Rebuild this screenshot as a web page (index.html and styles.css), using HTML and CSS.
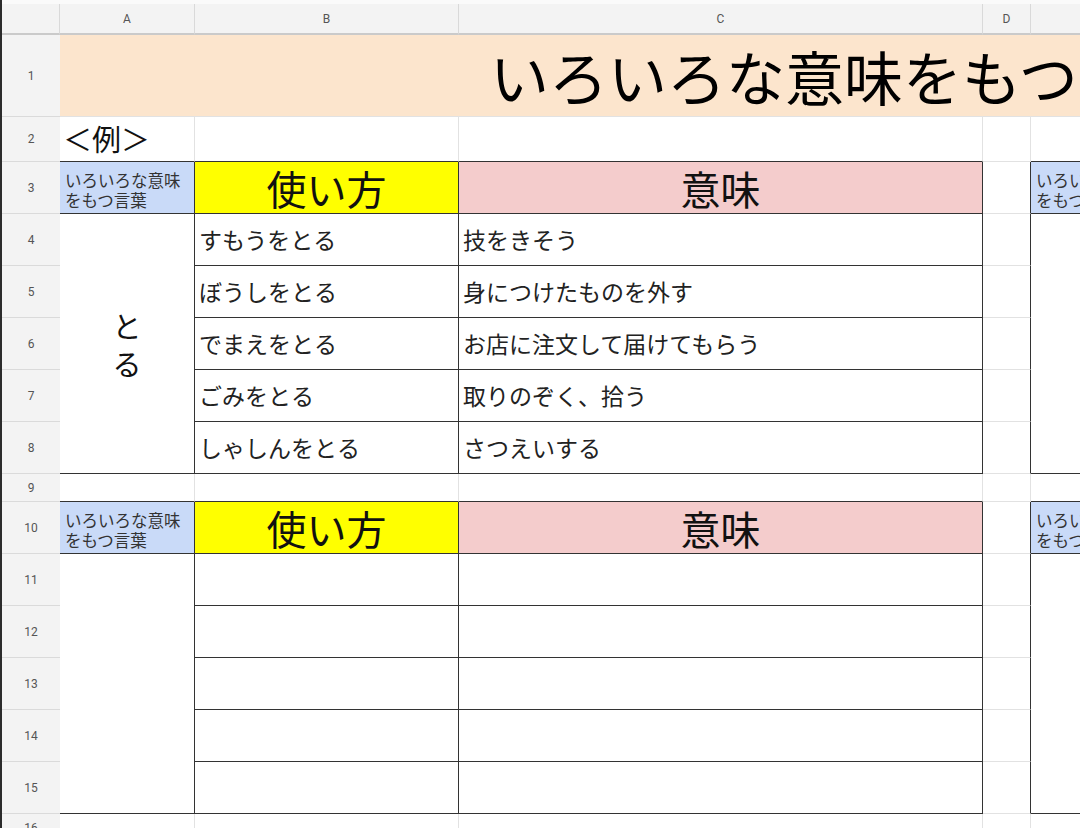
FILE: index.html
```html
<!DOCTYPE html>
<html lang="ja">
<head>
<meta charset="utf-8">
<title>いろいろな意味をもつ言葉</title>
<link rel="stylesheet" href="styles.css">
</head>
<body>
<div class="frame">
  <div class="sheet">
    <!-- column headers -->
    <div class="colhead"></div>
    <div class="colhead">A</div>
    <div class="colhead">B</div>
    <div class="colhead">C</div>
    <div class="colhead">D</div>
    <div class="colhead"></div>

    <!-- row 1: title -->
    <div class="rowhead">1</div>
    <div class="cell title">いろいろな意味をもつ言葉</div>

    <!-- row 2 -->
    <div class="rowhead">2</div>
    <div class="cell dk-b example">＜例＞</div>
    <div class="cell dk-b"></div>
    <div class="cell dk-b"></div>
    <div class="cell"></div>
    <div class="cell dk-b"></div>

    <!-- row 3: first table head -->
    <div class="rowhead">3</div>
    <div class="cell dk-r dk-b word-head">いろいろな意味<br>をもつ言葉</div>
    <div class="cell dk-r dk-b use-head">使い方</div>
    <div class="cell dk-r dk-b mean-head">意味</div>
    <div class="cell dk-r"></div>
    <div class="cell dk-b word-head">いろいろな意味<br>をもつ言葉</div>

    <!-- rows 4-8 -->
    <div class="rowhead">4</div>
    <div class="cell dk-r dk-b word span5">と<br>る</div>
    <div class="cell dk-r dk-b entry">すもうをとる</div>
    <div class="cell dk-r dk-b entry">技をきそう</div>
    <div class="cell dk-r"></div>
    <div class="cell dk-b span5"></div>

    <div class="rowhead">5</div>
    <div class="cell dk-r dk-b entry">ぼうしをとる</div>
    <div class="cell dk-r dk-b entry">身につけたものを外す</div>
    <div class="cell dk-r"></div>

    <div class="rowhead">6</div>
    <div class="cell dk-r dk-b entry">でまえをとる</div>
    <div class="cell dk-r dk-b entry">お店に注文して届けてもらう</div>
    <div class="cell dk-r"></div>

    <div class="rowhead">7</div>
    <div class="cell dk-r dk-b entry">ごみをとる</div>
    <div class="cell dk-r dk-b entry">取りのぞく、拾う</div>
    <div class="cell dk-r"></div>

    <div class="rowhead">8</div>
    <div class="cell dk-r dk-b entry">しゃしんをとる</div>
    <div class="cell dk-r dk-b entry">さつえいする</div>
    <div class="cell dk-r"></div>

    <!-- row 9: spacer -->
    <div class="rowhead">9</div>
    <div class="cell dk-b"></div>
    <div class="cell dk-b"></div>
    <div class="cell dk-b"></div>
    <div class="cell"></div>
    <div class="cell dk-b"></div>

    <!-- row 10: second table head -->
    <div class="rowhead">10</div>
    <div class="cell dk-r dk-b word-head">いろいろな意味<br>をもつ言葉</div>
    <div class="cell dk-r dk-b use-head">使い方</div>
    <div class="cell dk-r dk-b mean-head">意味</div>
    <div class="cell dk-r"></div>
    <div class="cell dk-b word-head">いろいろな意味<br>をもつ言葉</div>

    <!-- rows 11-15: blank entries -->
    <div class="rowhead">11</div>
    <div class="cell dk-r dk-b span5"></div>
    <div class="cell dk-r dk-b"></div>
    <div class="cell dk-r dk-b"></div>
    <div class="cell dk-r"></div>
    <div class="cell dk-b span5"></div>

    <div class="rowhead">12</div>
    <div class="cell dk-r dk-b"></div>
    <div class="cell dk-r dk-b"></div>
    <div class="cell dk-r"></div>

    <div class="rowhead">13</div>
    <div class="cell dk-r dk-b"></div>
    <div class="cell dk-r dk-b"></div>
    <div class="cell dk-r"></div>

    <div class="rowhead">14</div>
    <div class="cell dk-r dk-b"></div>
    <div class="cell dk-r dk-b"></div>
    <div class="cell dk-r"></div>

    <div class="rowhead">15</div>
    <div class="cell dk-r dk-b"></div>
    <div class="cell dk-r dk-b"></div>
    <div class="cell dk-r"></div>

    <!-- row 16 -->
    <div class="rowhead">16</div>
    <div class="cell"></div>
    <div class="cell"></div>
    <div class="cell"></div>
    <div class="cell"></div>
    <div class="cell"></div>
  </div>
</div>
</body>
</html>
```

FILE: styles.css
```css
html, body {
  margin: 0;
  padding: 0;
  background: #ffffff;
}

body {
  width: 1080px;
  height: 828px;
  overflow: hidden;
  font-family: "Noto Sans CJK JP", "Noto Sans", sans-serif;
  color: #222;
}

.frame {
  box-sizing: border-box;
  height: 828px;
  padding-top: 4px;
  border-left: 2px solid #2b2b2b;
  background: #fafafa;
  overflow: hidden;
}

.sheet {
  display: grid;
  grid-template-columns: 58px 135px 264px 524px 48px 135px;
  grid-template-rows: 31px 82px 45px repeat(6, 52px) 28px repeat(6, 52px) 28px;
  background: #ffffff;
}

.sheet > div {
  box-sizing: border-box;
  min-width: 0;
  overflow: hidden;
}

/* header strip with column letters */
.colhead {
  background: #f3f3f3;
  border-right: 1px solid #d9d9d9;
  border-bottom: 2px solid #cacaca;
  display: flex;
  align-items: center;
  justify-content: center;
  font-family: Roboto, "Liberation Sans", sans-serif;
  font-size: 12px;
  color: #555;
}

/* gutter with row numbers */
.rowhead {
  background: #f3f3f3;
  border-bottom: 1px solid #dadada;
  display: flex;
  align-items: center;
  justify-content: center;
  font-family: Roboto, "Liberation Sans", sans-serif;
  font-size: 12px;
  color: #555;
}

/* plain grid cell */
.cell {
  border-right: 1px solid #e2e2e2;
  border-bottom: 1px solid #e2e2e2;
  background: #ffffff;
}

.dk-b { border-bottom-color: #333; }
.dk-r { border-right-color: #333; }

.span5 { grid-row: span 5; }

.title {
  grid-column: span 5;
  background: #fce5cd;
  display: flex;
  align-items: center;
  padding-left: 430px;
  white-space: nowrap;
  font-size: 59px;
  line-height: 1;
  color: #000;
}

.example {
  display: flex;
  align-items: flex-end;
  padding: 0 0 3px 3px;
  font-size: 29px;
  line-height: 1.3;
  color: #111;
}

.word-head {
  background: #c9daf8;
  display: flex;
  align-items: flex-end;
  padding: 0 0 3px 5px;
  font-size: 16.5px;
  line-height: 20px;
  color: #333;
  white-space: nowrap;
}

.use-head,
.mean-head {
  display: flex;
  align-items: center;
  justify-content: center;
  font-size: 40px;
  line-height: 1;
  color: #111;
}

.use-head { background: #ffff00; }
.mean-head { background: #f4cccc; }

.word {
  display: flex;
  align-items: center;
  justify-content: center;
  text-align: center;
  font-size: 29px;
  line-height: 38px;
  color: #111;
}

.entry {
  display: flex;
  align-items: center;
  padding-left: 4px;
  white-space: nowrap;
  font-size: 23px;
  line-height: 1.2;
  color: #222;
}
```
